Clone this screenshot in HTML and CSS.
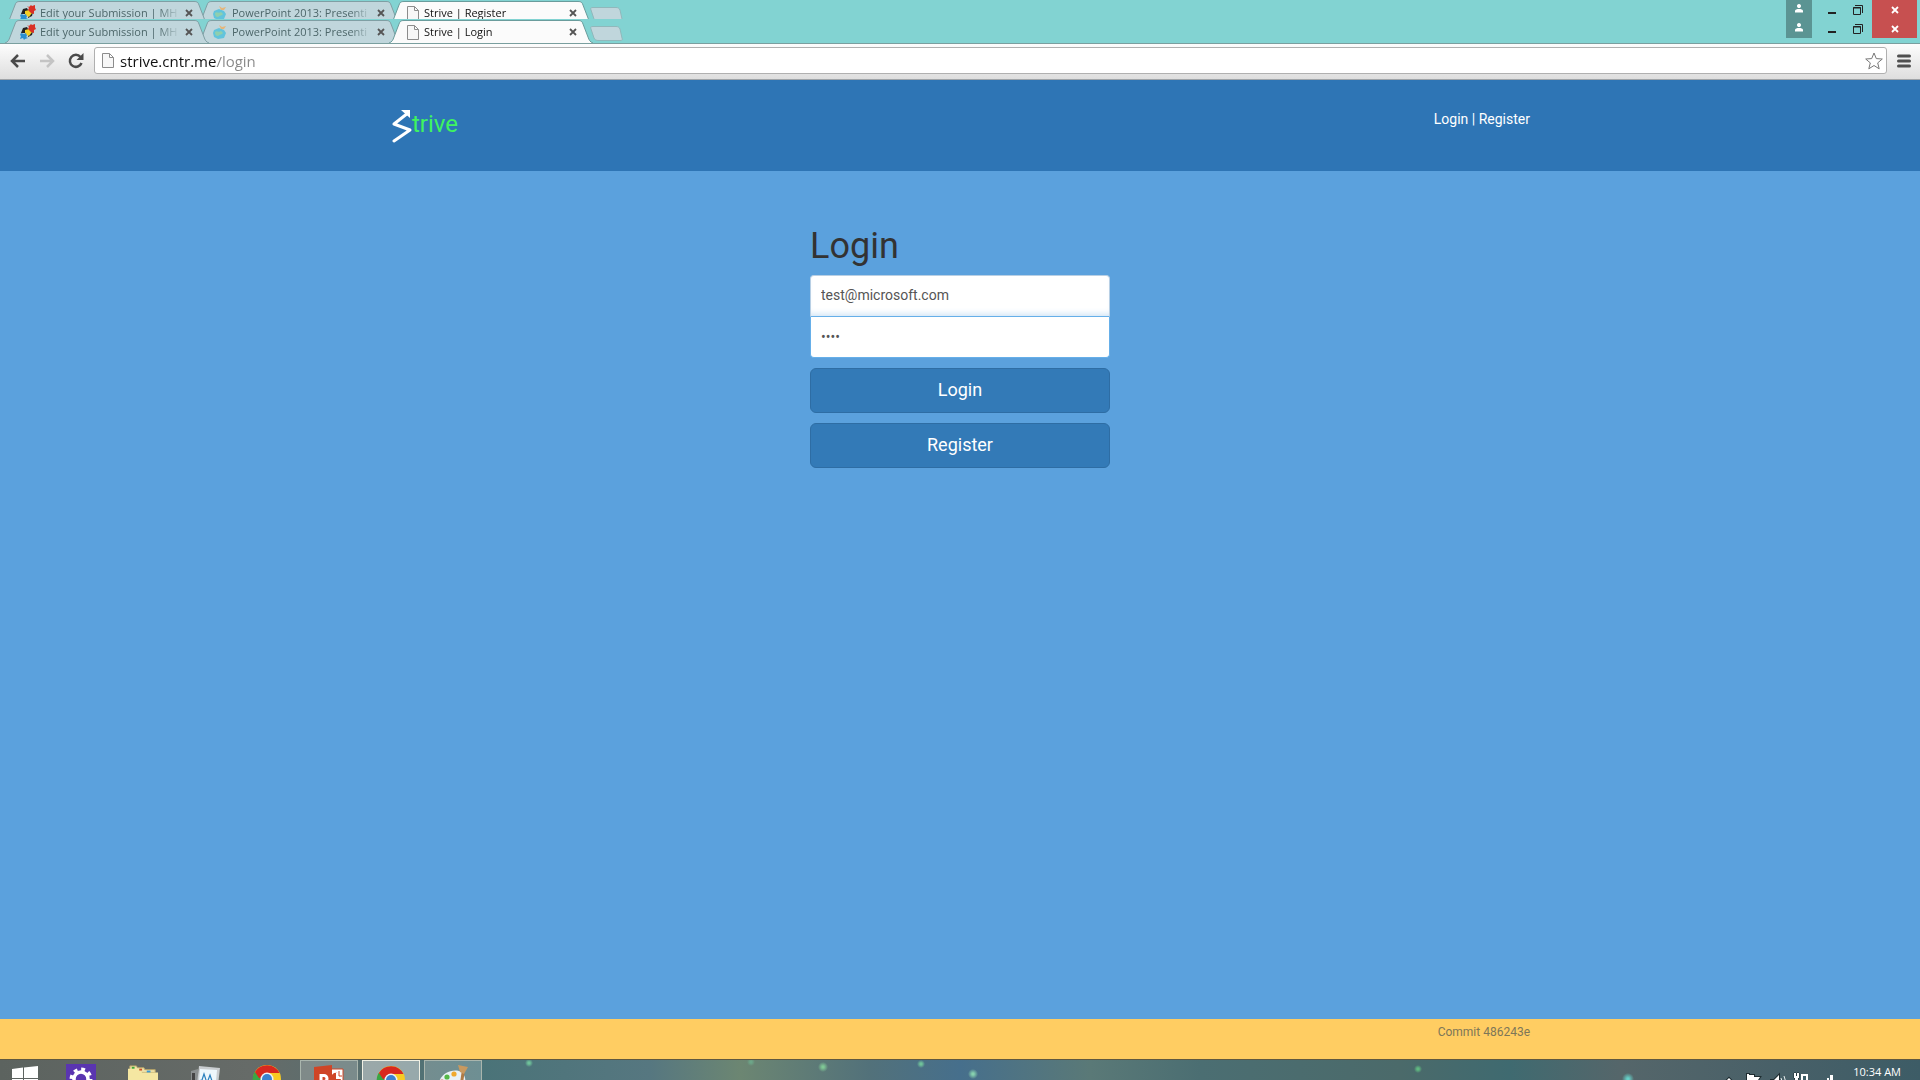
FILE: index.html
```html
<!DOCTYPE html>
<html lang="en">
<head>
<meta charset="utf-8">
<title>Strive | Login</title>
<link rel="stylesheet" href="styles.css">
</head>
<body>
<svg class="defs" aria-hidden="true">
  <defs>
    <symbol id="tab" viewBox="0 0 204 24"><path d="M0 24 C3 23 4 21 5 18 L10 5 C11 2 12 1.500 15 1.500 H189 C192 1.500 193 2 194 5 L199 18 C200 21 201 23 204 24"/></symbol>
    <symbol id="newtab" viewBox="0 0 33 16"><path d="M3 .5 H26 C28 .5 29 1 30 3 L32 12 C33 14 32 14.500 30 14.500 H9 C6 14.500 5 14 4 12 L1 3 C0 1 1 .5 3 .5Z"/></symbol>
    <symbol id="pinwheel" viewBox="0 0 16 16">
      <path d="M3 4 L7 3 L9 7 L8 9 L1 9Z" fill="#222"/>
      <path d="M8 8 L13 7 L12 11 L8 13Z" fill="#222"/>
      <path d="M5 6 L9 5 L12 8 L9 12 L5 10Z" fill="#f5cf24"/>
      <path d="M7 1 L9 2 L11 0 L12 1 L15 0 L15 3 L16 5 L14 6 L14 9 L11 8 L8 5 L9 3Z" fill="#d93025"/>
      <path d="M1 9 L4 10 L6 9 L7 12 L6 13 L8 14 L5 15 L4 16 L3 14 L0 15 L1 12 L0 11Z" fill="#2a8fd0"/>
    </symbol>
    <symbol id="globe" viewBox="0 0 16 16">
      <path d="M2 6 L7 4 L12 6 L14 9 L12 14 L6 15 L2 13 L1 9Z" fill="#62c4dc"/>
      <path d="M3 8 C5 6 6 9 9 7 L11 9 C10 11 8 10 6 12 C4 12 3 11 3 8Z" fill="#8fcfae"/>
      <path d="M7 1 L10 3 L14 2 L12 5 L9 5Z" fill="#e6b67a"/>
    </symbol>
    <symbol id="page" viewBox="0 0 12 15"><path d="M1 .5 H7.500 L11.500 4.500 V14.500 H.5 V.5Z M7.500 .5 V4.500 H11.500" fill="#f7f7f7" stroke="#8c8c8c"/></symbol>
    <symbol id="x" viewBox="0 0 8 8"><path d="M1 1 L7 7 M7 1 L1 7" fill="none" stroke="currentColor" stroke-width="1.800"/></symbol>
    <symbol id="user" viewBox="0 0 8 9"><path d="M4 0 C5.500 0 6 1 6 2 C6 3.500 5 4 4 4 S2 3.500 2 2 C2 1 2.500 0 4 0Z M0 8.500 V7 C0 5.500 2 5 4 5 S8 5.500 8 7 V8.500Z" fill="#fff"/></symbol>
    <symbol id="min" viewBox="0 0 8 10"><path d="M0 7 H8 V9 H0Z" fill="#222"/></symbol>
    <symbol id="restore" viewBox="0 0 10 10"><path d="M.5 2.500 H7.500 V9.500 H.5Z M0 3 H8 M2 .5 H9.500 V8" fill="none" stroke="#222"/></symbol>
    <symbol id="chrome" viewBox="0 0 30 30">
      <circle cx="15" cy="15" r="14" fill="#f8cb23"/>
      <path d="M15 15 L2.500 8 A14 14 0 0 0 14 29 L20 19Z" fill="#3aa644"/>
      <path d="M15 15 L7 14 L2.900 8 A14 14 0 0 1 27.500 9 H15Z" fill="#d8281f"/>
      <circle cx="15" cy="15" r="6.500" fill="#eef3f8"/>
      <circle cx="15" cy="15" r="5" fill="#3c82cf"/>
    </symbol>
  </defs>
</svg>

<header class="browser">
  <div class="strip strip-back">
    <div class="tabs">
      <div class="tab"><svg class="shape"><use href="#tab"/></svg><svg class="fav"><use href="#pinwheel"/></svg><span class="title">Edit your Submission | MH</span><button class="close" aria-label="Close tab"><svg><use href="#x"/></svg></button></div>
      <div class="tab"><svg class="shape"><use href="#tab"/></svg><svg class="fav"><use href="#globe"/></svg><span class="title">PowerPoint 2013: Presenti</span><button class="close" aria-label="Close tab"><svg><use href="#x"/></svg></button></div>
      <div class="tab active"><svg class="shape"><use href="#tab"/></svg><svg class="fav page"><use href="#page"/></svg><span class="title">Strive | Register</span><button class="close" aria-label="Close tab"><svg><use href="#x"/></svg></button></div>
      <button class="newtab" aria-label="New tab"><svg><use href="#newtab"/></svg></button>
    </div>
    <div class="controls">
      <button class="profile" aria-label="Profile"><svg><use href="#user"/></svg></button>
      <button class="minimise" aria-label="Minimise"><svg><use href="#min"/></svg></button>
      <button class="restore" aria-label="Restore"><svg><use href="#restore"/></svg></button>
      <button class="quit" aria-label="Close"><svg><use href="#x"/></svg></button>
    </div>
  </div>
  <div class="strip">
    <div class="tabs">
      <div class="tab"><svg class="shape"><use href="#tab"/></svg><svg class="fav"><use href="#pinwheel"/></svg><span class="title">Edit your Submission | MH</span><button class="close" aria-label="Close tab"><svg><use href="#x"/></svg></button></div>
      <div class="tab"><svg class="shape"><use href="#tab"/></svg><svg class="fav"><use href="#globe"/></svg><span class="title">PowerPoint 2013: Presenti</span><button class="close" aria-label="Close tab"><svg><use href="#x"/></svg></button></div>
      <div class="tab active"><svg class="shape"><use href="#tab"/></svg><svg class="fav page"><use href="#page"/></svg><span class="title">Strive | Login</span><button class="close" aria-label="Close tab"><svg><use href="#x"/></svg></button></div>
      <button class="newtab" aria-label="New tab"><svg><use href="#newtab"/></svg></button>
    </div>
    <div class="controls">
      <button class="profile" aria-label="Profile"><svg><use href="#user"/></svg></button>
      <button class="minimise" aria-label="Minimise"><svg><use href="#min"/></svg></button>
      <button class="restore" aria-label="Restore"><svg><use href="#restore"/></svg></button>
      <button class="quit" aria-label="Close"><svg><use href="#x"/></svg></button>
    </div>
  </div>
  <div class="toolbar">
    <button class="nav" aria-label="Back"><svg viewBox="0 0 16 16"><path d="M15 8 H3 M8 2 L2 8 L8 14" stroke="#4a4a4a"/></svg></button>
    <button class="nav" aria-label="Forward"><svg viewBox="0 0 16 16"><path d="M1 8 H13 M8 2 L14 8 L8 14" stroke="#c4c4c4"/></svg></button>
    <button class="nav" aria-label="Reload"><svg viewBox="0 0 16 16"><path d="M12.500 4 A6 6 0 1 0 13.500 10" stroke="#4a4a4a"/><path d="M15.500 0 V7 H8.500Z" fill="#4a4a4a"/></svg></button>
    <div class="omnibox">
      <svg class="page"><use href="#page"/></svg>
      <input class="url" type="text" aria-label="Address" value="strive.cntr.me/login">
      <button class="star" aria-label="Bookmark"><svg viewBox="0 0 18 18"><path d="M9 1 L11.300 6.600 L17.300 7 L12.700 10.900 L14.200 16.800 L9 13.500 L3.800 16.800 L5.300 10.900 L.7 7 L6.700 6.600Z" fill="#fff" stroke="#777"/></svg></button>
    </div>
    <button class="menu" aria-label="Menu"><svg viewBox="0 0 14 14"><path d="M1.500 2 H12.500 M1.500 7 H12.500 M1.500 12 H12.500" stroke="#4f4f4f" stroke-width="3" stroke-linecap="round"/></svg></button>
  </div>
</header>

<div class="masthead">
  <div class="container">
    <a class="brand" href="#"><svg viewBox="0 0 20 34"><path d="M2 32 L18 21 L2 15 L16 4" fill="none" stroke="#fff" stroke-width="3" stroke-linecap="round" stroke-linejoin="round"/><path d="M9 1 H18 V9Z" fill="#fff"/></svg><span>trive</span></a>
    <nav class="links"><a href="#">Login</a> | <a href="#">Register</a></nav>
  </div>
</div>

<main class="content">
  <form class="signin">
    <h1>Login</h1>
    <input class="field first" type="email" aria-label="Email" value="test@microsoft.com">
    <input class="field last" type="password" aria-label="Password" value="test">
    <button class="btn" type="button">Login</button>
    <button class="btn" type="button">Register</button>
  </form>
</main>

<footer class="footer"><div class="container"><span>Commit 486243e</span></div></footer>

<div class="taskbar">
  <button class="start" aria-label="Start"><svg viewBox="0 0 26 26"><path d="M0 3 L11 1.500 V12 H0Z M12 1.500 L26 0 V12 H12Z M0 13 H11 V24 L0 22Z M12 13 H26 V26 L12 24Z" fill="#fff"/></svg></button>
  <button class="task" aria-label="Settings"><svg viewBox="0 0 30 30"><path d="M0 0 H30 V30 H0Z" fill="#5a35b0"/><circle cx="15" cy="15" r="7" fill="none" stroke="#fff" stroke-width="3.500"/><circle cx="15" cy="15" r="9.700" fill="none" stroke="#fff" stroke-width="3.400" stroke-dasharray="3.800 3.800"/></svg></button>
  <button class="task" aria-label="File Explorer"><svg viewBox="0 0 32 30"><path d="M2 1 H9 L10 3 H17 L18 5 H29 V8 H2Z" fill="#efe2a8" stroke="#b9a566"/><path d="M0 9 V4 H12 L15 8 H32 V30 H0Z" fill="#f5e7a2"/><path d="M4 2 H7 V4 H4Z" fill="#3da636"/><path d="M12 4 H15 V6 H12Z" fill="#cf5226"/><path d="M20 6 H24 V8 H20Z" fill="#3c9ad0"/></svg></button>
  <button class="task" aria-label="Monitor"><svg viewBox="0 0 30 30"><path d="M1 7 L8 5 V30 H1Z" fill="#8b8f90"/><path d="M2 9 H5 V30 H2Z" fill="#444"/><path d="M9 2 L30 4 L27 30 H6Z" fill="#c9cdd0"/><path d="M10 5 L27 6 L25 30 H8Z" fill="#eef7fc"/><path d="M8 17 L12 16 L14 10 L17 19 L20 11 L22 17 H26" fill="none" stroke="#2a7fbd" stroke-width="1.200"/></svg></button>
  <button class="task" aria-label="Chrome"><svg viewBox="0 0 30 30"><use href="#chrome"/></svg></button>
  <button class="task open" aria-label="PowerPoint"><svg viewBox="0 0 30 30"><path d="M16 4 H29 V30 H16Z" fill="#fff" stroke="#cf4526"/><path d="M24 8 A5 5 0 1 0 27 14 H22 V8Z" fill="#cf4526"/><path d="M25 6 V11 H28" fill="none" stroke="#cf4526"/><path d="M0 2 L18 0 V30 H0Z" fill="#cf4526"/><path d="M7 22 V10.500 H10 A3 3 0 0 1 10 16.500 H7" fill="none" stroke="#fff" stroke-width="3"/></svg></button>
  <button class="task open current" aria-label="Chrome window"><svg viewBox="0 0 30 30"><use href="#chrome"/></svg></button>
  <button class="task open" aria-label="Paint"><svg viewBox="0 0 30 30"><path d="M0 20 C2 10 11 4 21 6 C28 8 29 18 25 24 L10 30 H2Z" fill="#e8f1f6"/><circle cx="9" cy="12" r="2.600" fill="#55b848"/><circle cx="16" cy="9" r="2.600" fill="#f0a92e"/><circle cx="4" cy="17" r="2.500" fill="#e0493c"/><path d="M22 28 L25 8" stroke="#b07b45" stroke-width="3"/><path d="M20 0 L30 2 L26 9 L22 7Z" fill="#c8995f"/></svg></button>
  <div class="tray">
    <svg viewBox="0 0 120 18">
      <path d="M4 10 L8 6 L12 10Z M26 2 H28 V3 H33 V5 H39 L37 8 L39 12 H28 V18 H26Z M50 8 H53 L58 3 V18 L53 14 H50Z" fill="#fff" stroke="#1e2c30" stroke-width="2" paint-order="stroke"/>
      <path d="M73 1 H75 V4 H76 V1 H78 V6 H77 V12 H74 V6 H73Z" fill="#fff" stroke="#1e2c30" paint-order="stroke"/>
      <path d="M81 3 H86 V16 H81Z" fill="#3f5f68" stroke="#fff" stroke-width="2"/>
      <path d="M100 13 H102 V18 H100Z M103 10 H105 V18 H103Z M106 6 H108 V18 H106Z M109 3 H112 V18 H109Z" fill="#fff"/>
      <path d="M60 6 Q62 9 60 12 M63 4 Q66 9 63 14" fill="none" stroke="#e8eeee"/>
    </svg>
    <time>10:34 AM</time>
  </div>
</div>
</body>
</html>
```
FILE: styles.css
```css
* { box-sizing: border-box; }

body {
  margin: 0;
  min-height: 100vh;
  display: flex;
  flex-direction: column;
  background: #5ba1dd;
  color: #333;
  font: 14px/20px Roboto, sans-serif;
}

button {
  margin: 0;
  padding: 0;
  border: 0;
  background: none;
  color: inherit;
  font: inherit;
}

svg { display: block; }
.defs { position: absolute; width: 0; height: 0; }

/* Browser window */
.browser { background: #82d3d2; font-family: "Open Sans", sans-serif; }

.strip {
  display: flex;
  justify-content: space-between;
  align-items: flex-start;
  height: 24px;
}
.strip-back { height: 19px; overflow: hidden; }

.tabs { display: flex; padding-left: 5px; isolation: isolate; }

.tab {
  position: relative;
  z-index: 1;
  display: flex;
  align-items: center;
  flex: none;
  width: 204px;
  height: 24px;
  margin-right: -12px;
  padding: 2px 16px 0 15px;
  color: #4d676a;
  font-size: 11px;
}
.tab:first-child { z-index: 2; }
.tab.active { z-index: 3; color: #111; }

.shape {
  position: absolute;
  inset: 0;
  z-index: -1;
  width: 204px;
  height: 24px;
  fill: #c0d6dc;
  stroke: #7f9fa4;
}
.active .shape { fill: #fbfbfb; stroke: #6a9c9c; }

.fav { flex: none; width: 16px; height: 16px; margin-right: 4px; }
.fav.page { width: 12px; height: 15px; margin: 0 5px 0 3px; }

.title {
  width: 142px;
  white-space: nowrap;
  mask-image: linear-gradient(to right, #000 118px, transparent 140px);
}
.close { margin-left: auto; color: #555; }
.close svg { width: 8px; height: 8px; }

.newtab { margin: 6px 0 0 9px; }
.newtab svg { width: 33px; height: 16px; fill: #c0d6dc; stroke: #90b8bb; }

.controls { display: flex; height: 19px; padding-right: 3px; }
.controls button { display: flex; align-items: center; justify-content: center; height: 19px; }
.profile { width: 26px; margin-right: 8px; padding-bottom: 2px; background: #5b9493; }
.profile svg { width: 8px; height: 9px; }
.minimise { width: 24px; }
.minimise svg { width: 8px; height: 10px; }
.restore { width: 28px; }
.restore svg { width: 10px; height: 10px; }
.quit { width: 45px; background: #c75050; color: #fff; }
.quit svg { width: 8px; height: 8px; }

.toolbar {
  display: flex;
  align-items: center;
  gap: 13px;
  height: 37px;
  padding: 0 9px 2px 10px;
  border-top: 1px solid #7a9f9f;
  border-bottom: 1px solid #a0a4a8;
  background: linear-gradient(#fdfdfd, #dedede);
}
.nav svg { width: 16px; height: 16px; fill: none; stroke-width: 2.500px; }

.omnibox {
  display: flex;
  flex: 1;
  align-items: center;
  height: 27px;
  margin: 0 -3px 0 -3px;
  padding: 0 3px 0 7px;
  border: 1px solid #b0b0b0;
  border-radius: 3px;
  background: #fff;
}
.omnibox .page { width: 12px; height: 15px; }
.url {
  flex: 1;
  height: 22px;
  margin-left: 6px;
  padding: 0;
  border: 0;
  outline: 0;
  background: linear-gradient(to right, #111 97px, #888 97px) text;
  color: transparent;
  font: 15px/22px "Open Sans", sans-serif;
}
.star svg { width: 18px; height: 18px; }
.menu svg { width: 14px; height: 14px; }

/* Site */
.container {
  display: flex;
  justify-content: space-between;
  width: 100%;
  max-width: 1170px;
  margin: 0 auto;
  padding: 0 15px;
}

.masthead { padding: 29px 0 28px; background: #2e75b5; }
.brand {
  display: flex;
  padding-left: 2px;
  color: #3ff35f;
  font-size: 24px;
  line-height: 30px;
  text-decoration: none;
}
.brand svg { width: 20px; height: 34px; }
.links { color: #fff; }
.links a { color: inherit; text-decoration: none; }

.content { flex: 1; padding: 55px 15px 40px; }
.signin { display: flex; flex-direction: column; max-width: 300px; margin: 0 auto; }
.signin h1 { margin: 0 0 9px; font-size: 36px; font-weight: 400; line-height: 40px; }

.field {
  padding: 10px;
  border: 1px solid #b8cfe4;
  background: #fff;
  color: #555;
  font: 14px/20px Roboto, sans-serif;
  outline: 0;
}
.first {
  height: 42px;
  padding: 9px 10px 11px;
  border-bottom-color: #66afe9;
  border-radius: 4px 4px 0 0;
  box-shadow: inset 0 -6px 6px -4px #cfe3f5;
}
.last {
  height: 41px;
  margin-bottom: 10px;
  padding-top: 9px;
  border-color: #66afe9;
  border-top: 0;
  border-radius: 0 0 4px 4px;
}

.btn {
  height: 45px;
  margin-bottom: 10px;
  padding-bottom: 2px;
  border: 1px solid #2e6da4;
  border-radius: 6px;
  background: #337ab7;
  color: #fff;
  font-size: 18px;
}

.footer {
  height: 40px;
  padding-top: 3px;
  background: #ffcd62;
  color: #7d7658;
  font-size: 12px;
}
.footer .container { justify-content: flex-end; }

/* Desktop taskbar */
.taskbar {
  display: flex;
  height: 21px;
  overflow: hidden;
  border-top: 1px solid #5e5840;
  background:
    radial-gradient(circle at 529px 3px, #6fc29a 1px, transparent 4px),
    radial-gradient(circle at 751px 2px, #6fc29a88 1px, transparent 4px),
    radial-gradient(circle at 823px 7px, #7fc795 1px, transparent 5px),
    radial-gradient(circle at 921px 4px, #6fc29a 1px, transparent 4px),
    radial-gradient(circle at 973px 14px, #86d0ae 1px, transparent 5px),
    radial-gradient(circle at 1418px 9px, #5fb880 1px, transparent 4px),
    radial-gradient(circle at 1628px 19px, #66d0c8 1px, transparent 6px),
    linear-gradient(to right, #5c635f 0, #666b68 250px, #4a7378 480px, #567780 650px, #6c8672 740px, #52717a 870px, #466f8c 960px, #5a7977 1090px, #4b6e72 1200px, #4b6a6a 1400px, #3f6a70 1510px, #55666a 1620px, #486068 1780px, #3d5c66 1920px);
  color: #fff;
  font-family: "Open Sans", sans-serif;
}
.start { display: flex; flex: none; width: 50px; height: 40px; padding: 6px 0 0 12px; }
.start svg { width: 26px; height: 26px; }
.task {
  display: flex;
  flex: none;
  justify-content: center;
  width: 58px;
  height: 40px;
  margin: 0 2px;
  padding-top: 4px;
}
.task svg { width: 30px; height: 30px; }
.open { border: 1px solid #a9b5ad; background: #ffffff33; }
.current { border-color: #f0f0e4; background: #ffffff66; }

.tray { display: flex; gap: 12px; margin-left: auto; padding-right: 19px; }
.tray svg { width: 120px; height: 18px; margin-top: 12px; }
.tray time { font-size: 11px; line-height: 24px; }
```
